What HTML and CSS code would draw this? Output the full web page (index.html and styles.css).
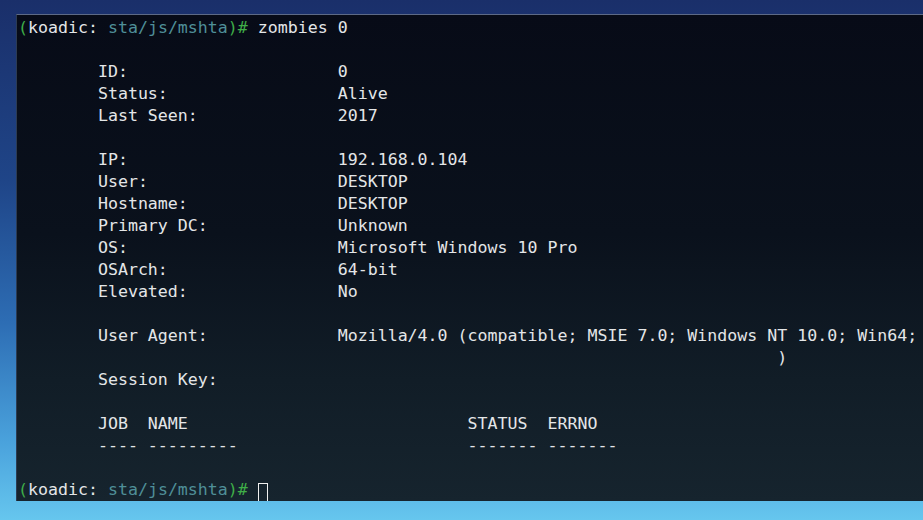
FILE: index.html
```html
<!DOCTYPE html>
<html lang="en">
<head>
  <meta charset="UTF-8">
  <title>koadic</title>
  <link rel="stylesheet" href="styles.css">
</head>
<body>
  <div class="desktop">
    <div class="terminal">
<pre class="screen"><span class="paren">(</span>koadic: <span class="path">sta/js/mshta</span><span class="paren">)#</span> zombies 0

        ID:                     0
        Status:                 Alive
        Last Seen:              2017

        IP:                     192.168.0.104
        User:                   DESKTOP
        Hostname:               DESKTOP
        Primary DC:             Unknown
        OS:                     Microsoft Windows 10 Pro
        OSArch:                 64-bit
        Elevated:               No

        User Agent:             Mozilla/4.0 (compatible; MSIE 7.0; Windows NT 10.0; Win64; x64)
                                                                            )
        Session Key:

        JOB  NAME                            STATUS  ERRNO
        ---- ---------                       ------- -------

<span class="paren">(</span>koadic: <span class="path">sta/js/mshta</span><span class="paren">)#</span> <span class="cursor"> </span></pre>
    </div>
  </div>
</body>
</html>
```

FILE: styles.css
```css
:root {
  --text-color: #e4e6e8;
  --prompt-green: #3fae48;
  --prompt-path: #4f8f98;
}

body {
  margin: 0;
  padding: 0;
  width: 923px;
  height: 520px;
  overflow: hidden;
}

.desktop {
  width: 923px;
  height: 520px;
  padding: 14px 0 0 16px;
  box-sizing: border-box;
  overflow: hidden;
  background: linear-gradient(180deg, #1a2f6a 0%, #1f4588 35%, #2d6db4 62%, #4aa2dc 85%, #66c6ee 100%);
}

.terminal {
  width: 940px;
  height: 487px;
  box-sizing: border-box;
  border-top: 1px solid #5d6a86;
  border-left: 1px solid #2c3b52;
  background: linear-gradient(180deg, #070b17 0%, #0a111c 45%, #111d27 75%, #16242e 100%);
  overflow: hidden;
}

.screen {
  margin: 0;
  padding: 2px 0 0 1px;
  font-family: "DejaVu Sans Mono", monospace;
  font-size: 16.6px;
  line-height: 22px;
  color: var(--text-color);
  white-space: pre;
}

.paren {
  color: var(--prompt-green);
}

.path {
  color: var(--prompt-path);
}

.cursor {
  display: inline-block;
  width: 10px;
  height: 22px;
  vertical-align: -5px;
  box-sizing: border-box;
  border: 1px solid #f0f0f0;
}
```
